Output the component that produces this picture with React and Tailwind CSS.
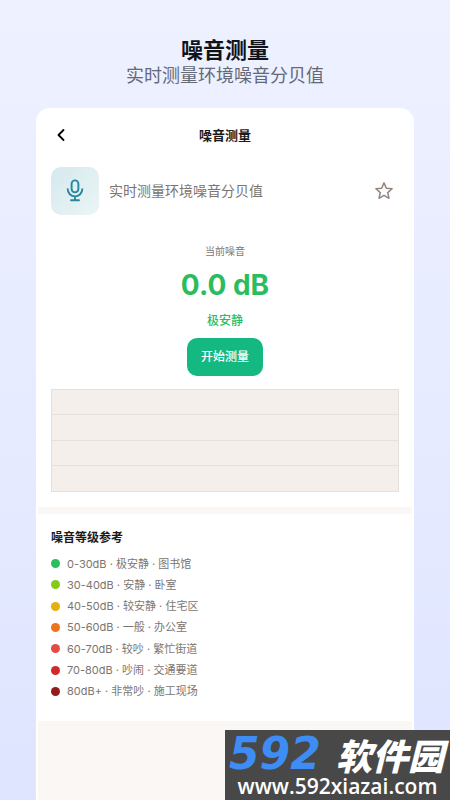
import React from "react";
import { ChevronLeft } from "lucide-react";

const levels = [
  { color: "bg-[#2bbd60]", text: "0-30dB · 极安静 · 图书馆" },
  { color: "bg-[#82cc18]", text: "30-40dB · 安静 · 卧室" },
  { color: "bg-[#e3b010]", text: "40-50dB · 较安静 · 住宅区" },
  { color: "bg-[#ee7420]", text: "50-60dB · 一般 · 办公室" },
  { color: "bg-[#e84848]", text: "60-70dB · 较吵 · 繁忙街道" },
  { color: "bg-[#d32828]", text: "70-80dB · 吵闹 · 交通要道" },
  { color: "bg-[#931b1d]", text: "80dB+ · 非常吵 · 施工现场" },
];

function MicIcon() {
  return (
    <svg viewBox="0 0 24 24" className="size-6 text-[#2687a0]" fill="none" stroke="currentColor" strokeWidth="1.9" strokeLinecap="round" aria-hidden="true">
      <rect x="8.6" y="1.4" width="6.8" height="12" rx="3.4" />
      <path d="M4.7 10.1a7.3 7.3 0 0 0 14.6 0M12 17.6v3.6M8 21.3h8" />
    </svg>
  );
}

function StarIcon() {
  return (
    <svg viewBox="0 0 20 20" className="size-5 text-[#91857e]" fill="none" stroke="currentColor" strokeWidth="1.5" strokeLinejoin="round" aria-hidden="true">
      <path d="M10 1.9l2.3 5.3 5.8.5-4.4 3.9 1.3 5.7-5-3-5 3 1.3-5.7-4.4-3.9 5.8-.5z" />
    </svg>
  );
}

function Header() {
  return (
    <header className="flex flex-col items-center pt-9 text-center">
      <h1 className="text-[22px] leading-7 font-bold text-[#10131a]">噪音测量</h1>
      <p className="text-lg leading-6 text-[#646976]">实时测量环境噪音分贝值</p>
    </header>
  );
}

function Reading() {
  return (
    <section className="flex flex-col items-center pt-7">
      <p className="text-[10px] leading-4 text-[#7c7570]">当前噪音</p>
      <p className="mt-2 text-[28px] leading-9 font-bold text-[#2bbd5d]">0.0 dB</p>
      <p className="mt-2 text-xs leading-5 font-medium text-[#2bbd5d]">极安静</p>
      <button type="button" className="mt-[7px] h-[38px] w-[76px] rounded-[10px] bg-[#13b981] text-xs font-medium text-white">
        开始测量
      </button>
    </section>
  );
}

function Chart() {
  return (
    <div className="mt-[13px] grid h-[103px] grid-rows-4 divide-y divide-[#e6e0da] border border-[#e6e0da] bg-[#f4efeb]">
      <div />
      <div />
      <div />
      <div />
    </div>
  );
}

function Levels() {
  return (
    <section className="bg-white px-[13px] pt-[14px] pb-[19px]">
      <h2 className="text-xs leading-5 font-bold text-[#1c1a19]">噪音等级参考</h2>
      <ul className="mt-[5px] flex h-[149px] flex-col justify-between">
        {levels.map((level) => (
          <li key={level.text} className="flex h-[21px] items-center gap-[7px]">
            <span className={"size-[9px] shrink-0 rounded-full " + level.color} />
            <span className="text-[11px] leading-4 whitespace-nowrap text-[#7c7570]">{level.text}</span>
          </li>
        ))}
      </ul>
    </section>
  );
}

function Watermark() {
  return (
    <a
      href="#"
      className="absolute right-0 bottom-0 flex h-[70px] w-[225px] flex-col items-center bg-[#484848] pt-1 whitespace-nowrap text-white"
    >
      <span className="flex w-full items-center justify-between pr-[6px] pl-1 leading-9 italic">
        <span className="font-['DejaVu_Sans',sans-serif] text-[44px] leading-10 font-bold text-[#3d8df5]">592</span>
        <span className="font-['Noto_Sans_CJK_SC',sans-serif] text-[36px] leading-9 font-black">软件园</span>
      </span>
      <span className="font-['Open_Sans',sans-serif] text-[21px] leading-6 font-semibold">www.592xiazai.com</span>
    </a>
  );
}

export default function App() {
  return (
    <div className="relative flex h-screen flex-col overflow-hidden bg-linear-to-b from-[#eef1ff] to-[#dfe5ff] font-['Inter','Noto_Sans_CJK_SC',sans-serif]">
      <Header />
      <main className="mx-9 mt-5 flex flex-1 flex-col rounded-t-[14px] border-x-2 border-white bg-[#faf7f4]">
        <div className="rounded-t-xl bg-white px-[13px] pb-[15px]">
          <nav className="grid h-[53px] grid-cols-[20px_1fr_20px] items-center">
            <button type="button" aria-label="返回" className="flex size-5 items-center justify-center">
              <ChevronLeft className="size-5 text-black" strokeWidth={2.2} />
            </button>
            <span className="text-center text-[13px] leading-5 font-bold text-[#1c1a19]">噪音测量</span>
          </nav>
          <div className="mt-[6px] flex items-center">
            <span className="flex size-12 items-center justify-center rounded-[10px] bg-linear-to-br from-[#d5e9ed] to-[#ebf5f6]">
              <MicIcon />
            </span>
            <p className="ml-[10px] flex-1 text-sm leading-5 text-[#7c7570]">实时测量环境噪音分贝值</p>
            <button type="button" aria-label="收藏" className="mr-[5px]">
              <StarIcon />
            </button>
          </div>
          <Reading />
          <Chart />
        </div>
        <div className="h-[7px] shrink-0" />
        <Levels />
      </main>
      <Watermark />
    </div>
  );
}
